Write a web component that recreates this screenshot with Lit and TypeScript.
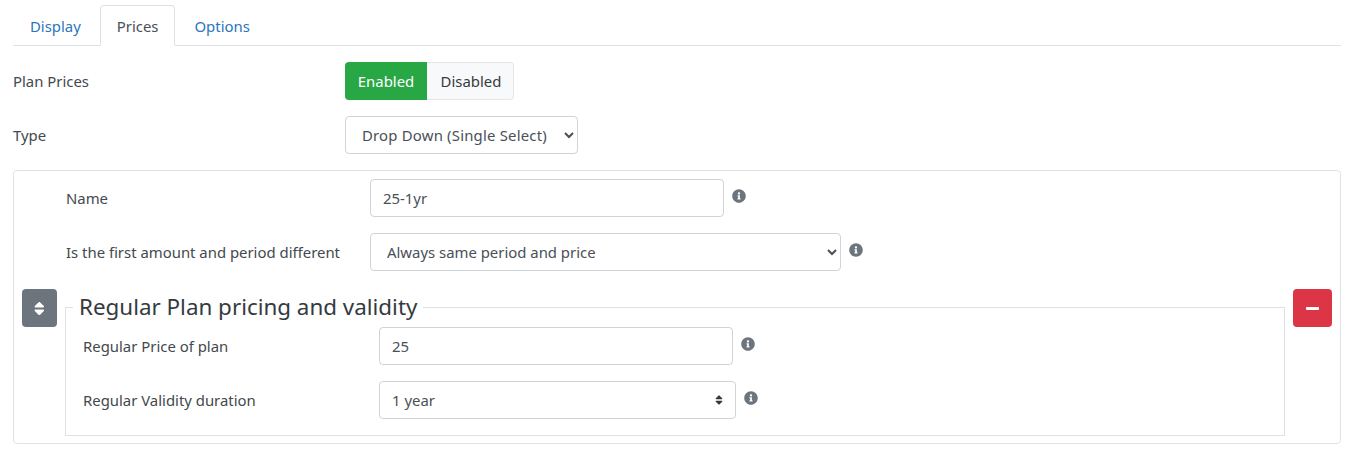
import { LitElement, html, css } from "lit";
import { customElement } from "lit/decorators.js";

const info = html`<svg class="info" viewBox="0 0 512 512"><path fill="currentColor" d="M256 8C119.043 8 8 119.083 8 256c0 136.997 111.043 248 248 248s248-111.003 248-248C504 119.083 392.957 8 256 8zm0 110c23.196 0 42 18.804 42 42s-18.804 42-42 42-42-18.804-42-42 18.804-42 42-42zm56 254c0 6.627-5.373 12-12 12h-88c-6.627 0-12-5.373-12-12v-24c0-6.627 5.373-12 12-12h12v-64h-12c-6.627 0-12-5.373-12-12v-24c0-6.627 5.373-12 12-12h64c6.627 0 12 5.373 12 12v100h12c6.627 0 12 5.373 12 12v24z"/></svg>`;

@customElement("app-root")
export class AppRoot extends LitElement {
  static styles = css`
    :host { display: block; width: 1350px; height: 449px; box-sizing: border-box; padding: 5px 9px 0 13px; background: #fff; overflow: hidden;
      font-family: "Noto Sans", "Open Sans", sans-serif; font-size: 14.9px; color: #43494e; }
    * { box-sizing: border-box; }
    .tabs { display: flex; gap: 2px; height: 41px; border-bottom: 1px solid #dee2e6; }
    .tab { height: 41px; padding: 0 16px; display: flex; align-items: center; color: #2b76bd; border: 1px solid transparent; }
    .tab.active { color: #495057; border-color: #dee2e6 #dee2e6 #fff; border-radius: 4px 4px 0 0; background: #fff; }
    .row { display: flex; align-items: flex-start; }
    .top { margin-top: 16px; height: 38px; }
    .top .lbl { width: 332px; line-height: 38px; }
    .group { display: flex; height: 38px; }
    .group span { display: flex; align-items: center; justify-content: center; }
    .on { width: 82px; background: #28a745; color: #fff; border-radius: 4px 0 0 4px; }
    .off { width: 87px; padding-left: 2px; background: #f8f9fa; border: 1px solid #e4e7ea; border-left: 0; border-radius: 0 4px 4px 0; color: #343a40; }
    select, input { font: inherit; color: #495057; height: 38px; background-color: #fff; border: 1px solid #ced4da; border-radius: 4px; outline: none; margin: 0; }
    input { padding: 0 12px; }
    select.native { padding: 0 12px; }
    .w233 { width: 233px; letter-spacing: 0.2px; }
    .w471 { width: 471px; }
    .w354 { width: 354px; }
    .card { margin-top: 16px; height: 274px; border: 1px solid #dfe3e6; border-radius: 4px; display: flex; align-items: center; padding: 2px 8px 0; }
    .side { flex: none; width: 35px; height: 38px; border-radius: 4px; display: flex; align-items: center; justify-content: center; color: #fff; }
    .sort { background: #6c757d; }
    .del { background: #dc3545; width: 39px; }
    .sort svg { display: block; height: 17px; }
    .del svg { display: block; height: 15px; }
    .main { flex: none; width: 1220px; margin: 0 8px; align-self: flex-start; padding-top: 6px; }
    .field { height: 38px; margin-bottom: 16px; }
    .field .lbl { line-height: 38px; flex: none; }
    .outer .lbl { width: 304px; margin-left: 1px; }
    .info { width: 14px; height: 14px; color: #6c757d; flex: none; margin-top: 10px; margin-left: 8px; display: block; }
    fieldset { margin: 23px 0 0; padding: 0 0 0 17px; border: 1px solid #dee2e6; height: 142px; }
    legend { font-size: 22.4px; line-height: 26px; padding: 0 6px; margin-left: -10px; color: #343a40; height: 26px; }
    .inner { margin-top: 7px; }
    .inner .lbl { width: 296px; }
    .custom { appearance: none; -webkit-appearance: none; padding: 0 30px 0 12px; width: 357px;
      background-image: url("data:image/svg+xml,%3Csvg xmlns='http://www.w3.org/2000/svg' viewBox='0 0 320 512'%3E%3Cpath fill='%23343a40' d='M41 288h238c21.4 0 32.1 25.9 17 41L177 448c-9.4 9.4-24.6 9.4-33.9 0L24 329c-15.1-15.1-4.4-41 17-41zm255-105L177 64c-9.4-9.4-24.6-9.4-33.9 0L24 183c-15.1 15.1-4.4 41 17 41h238c21.4 0 32.1-25.9 17-41z'/%3E%3C/svg%3E");
      background-repeat: no-repeat; background-position: right 12px center; background-size: 8px 12px; }
  `;

  render() {
    return html`
      <div class="tabs">
        <div class="tab">Display</div>
        <div class="tab active">Prices</div>
        <div class="tab">Options</div>
      </div>
      <div class="row top">
        <div class="lbl">Plan Prices</div>
        <div class="group"><span class="on">Enabled</span><span class="off">Disabled</span></div>
      </div>
      <div class="row top">
        <div class="lbl">Type</div>
        <select class="native w233"><option>Drop Down (Single Select)</option></select>
      </div>
      <div class="card">
        <div class="side sort"><svg viewBox="0 0 320 512"><path fill="currentColor" d="M41 288h238c21.4 0 32.1 25.9 17 41L177 448c-9.4 9.4-24.6 9.4-33.9 0L24 329c-15.1-15.1-4.4-41 17-41zm255-105L177 64c-9.4-9.4-24.6-9.4-33.9 0L24 183c-15.1 15.1-4.4 41 17 41h238c21.4 0 32.1-25.9 17-41z"/></svg></div>
        <div class="main">
          <div class="outer">
            <div class="row field"><div class="lbl">Name</div><input class="w354" value="25-1yr" />${info}</div>
            <div class="row field"><div class="lbl">Is the first amount and period different</div><select class="native w471"><option>Always same period and price</option></select>${info}</div>
          </div>
          <fieldset>
            <legend>Regular Plan pricing and validity</legend>
            <div class="inner">
              <div class="row field"><div class="lbl">Regular Price of plan</div><input class="w354" value="25" />${info}</div>
              <div class="row field"><div class="lbl">Regular Validity duration</div><select class="custom"><option>1 year</option></select>${info}</div>
            </div>
          </fieldset>
        </div>
        <div class="side del"><svg viewBox="0 0 448 512"><path fill="currentColor" d="M416 208H32c-17.67 0-32 14.33-32 32v32c0 17.67 14.33 32 32 32h384c17.67 0 32-14.33 32-32v-32c0-17.67-14.33-32-32-32z"/></svg></div>
      </div>
    `;
  }
}
